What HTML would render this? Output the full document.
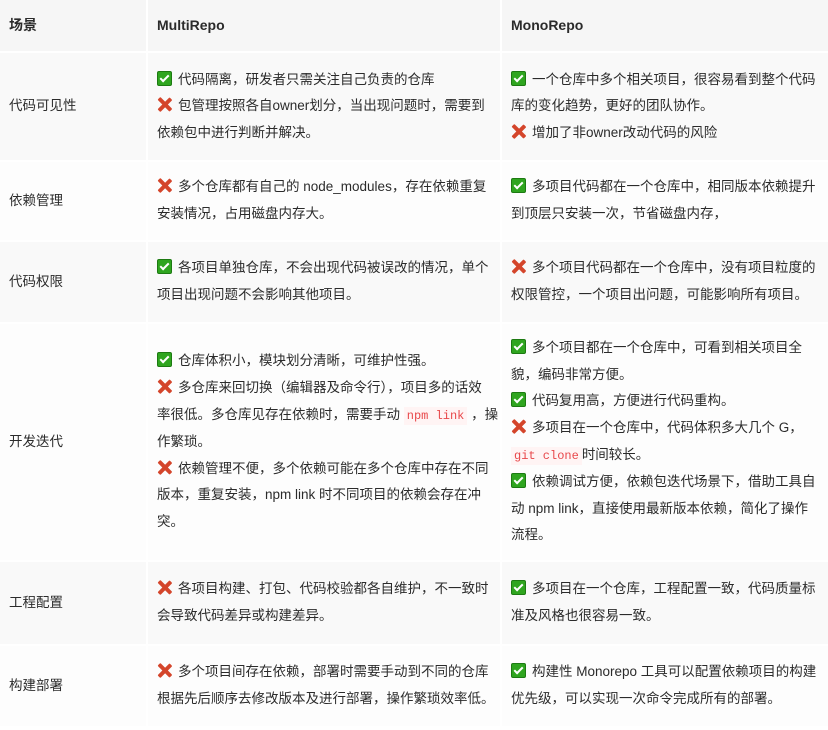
<!DOCTYPE html>
<html><head><meta charset="utf-8"><style>
html,body{margin:0;padding:0;background:#fff;}
body{width:828px;height:730px;overflow:hidden;font-family:"Liberation Sans","Noto Sans CJK SC",sans-serif;font-size:13.5px;color:#2b2b2b;}
table{border-collapse:separate;border-spacing:2px 2px;margin:-2px 0 0 -2px;width:832px;table-layout:fixed;}
td,th{vertical-align:middle;line-height:26.6px;padding:0 2px 0 9px;text-align:left;}
th{background:#f6f6f6;height:51px;font-weight:bold;font-size:14px;}
tr:nth-child(odd) td{background:#fdfdfd;}
tr:nth-child(even) td{background:#f9f9f9;}
.nw{white-space:nowrap;overflow:hidden;}
.ok{display:inline-block;width:15px;height:15px;background:#2fa51f;border:1px solid #1d7a12;border-radius:2px;position:relative;vertical-align:-2px;margin-right:6px;box-sizing:border-box;}
.ok:after{content:"";position:absolute;left:4px;top:1px;width:3px;height:7px;border:solid #fff;border-width:0 2px 2px 0;transform:rotate(45deg);}
.no{display:inline-block;width:15px;height:15px;position:relative;vertical-align:-2px;margin-right:6px;}
.no:before,.no:after{content:"";position:absolute;left:6px;top:-1px;width:3.5px;height:17px;background:#d4452b;transform:rotate(45deg);border-radius:1px;}
.no:after{transform:rotate(-45deg);}
code{font-family:"Liberation Mono",monospace;color:#e8484b;background:#fff4f4;padding:2px 3px;font-size:12px;white-space:nowrap;}
</style></head><body>
<table>
<colgroup><col style="width:146px"><col style="width:352px"><col style="width:328px"></colgroup>
<tr><th>场景</th><th>MultiRepo</th><th>MonoRepo</th></tr>
<tr style="height:107px"><td>代码可见性</td><td><span class="ok"></span>代码隔离，研发者只需关注自己负责的仓库<br><span class="no"></span>包管理按照各自owner划分，当出现问题时，需要到依赖包中进行判断并解决。</td><td><span class="ok"></span>一个仓库中多个相关项目，很容易看到整个代码库的变化趋势，更好的团队协作。<br><span class="no"></span>增加了非owner改动代码的风险</td></tr>
<tr style="height:78px"><td>依赖管理</td><td><span class="no"></span>多个仓库都有自己的 node_modules，存在依赖重复安装情况，占用磁盘内存大。</td><td><span class="ok"></span>多项目代码都在一个仓库中，相同版本依赖提升到顶层只安装一次，节省磁盘内存，</td></tr>
<tr style="height:80px"><td>代码权限</td><td><span class="ok"></span>各项目单独仓库，不会出现代码被误改的情况，单个项目出现问题不会影响其他项目。</td><td><span class="no"></span>多个项目代码都在一个仓库中，没有项目粒度的权限管控，一个项目出问题，可能影响所有项目。</td></tr>
<tr style="height:236px"><td>开发迭代</td><td class="nw"><span class="ok"></span>仓库体积小，模块划分清晰，可维护性强。<br><span class="no"></span>多仓库来回切换（编辑器及命令行），项目多的话效<br>率很低。多仓库见存在依赖时，需要手动 <code>npm link</code> ，操<br>作繁琐。<br><span class="no"></span>依赖管理不便，多个依赖可能在多个仓库中存在不同<br>版本，重复安装，npm link 时不同项目的依赖会存在冲<br>突。</td><td class="nw"><span class="ok"></span>多个项目都在一个仓库中，可看到相关项目全<br>貌，编码非常方便。<br><span class="ok"></span>代码复用高，方便进行代码重构。<br><span class="no"></span>多项目在一个仓库中，代码体积多大几个 G，<br><code>git clone</code>时间较长。<br><span class="ok"></span>依赖调试方便，依赖包迭代场景下，借助工具自<br>动 npm link，直接使用最新版本依赖，简化了操作<br>流程。</td></tr>
<tr style="height:82px"><td>工程配置</td><td><span class="no"></span>各项目构建、打包、代码校验都各自维护，不一致时会导致代码差异或构建差异。</td><td><span class="ok"></span>多项目在一个仓库，工程配置一致，代码质量标准及风格也很容易一致。</td></tr>
<tr style="height:80px"><td>构建部署</td><td><span class="no"></span>多个项目间存在依赖，部署时需要手动到不同的仓库根据先后顺序去修改版本及进行部署，操作繁琐效率低。</td><td><span class="ok"></span>构建性 Monorepo 工具可以配置依赖项目的构建优先级，可以实现一次命令完成所有的部署。</td></tr>
</table>
</body></html>
